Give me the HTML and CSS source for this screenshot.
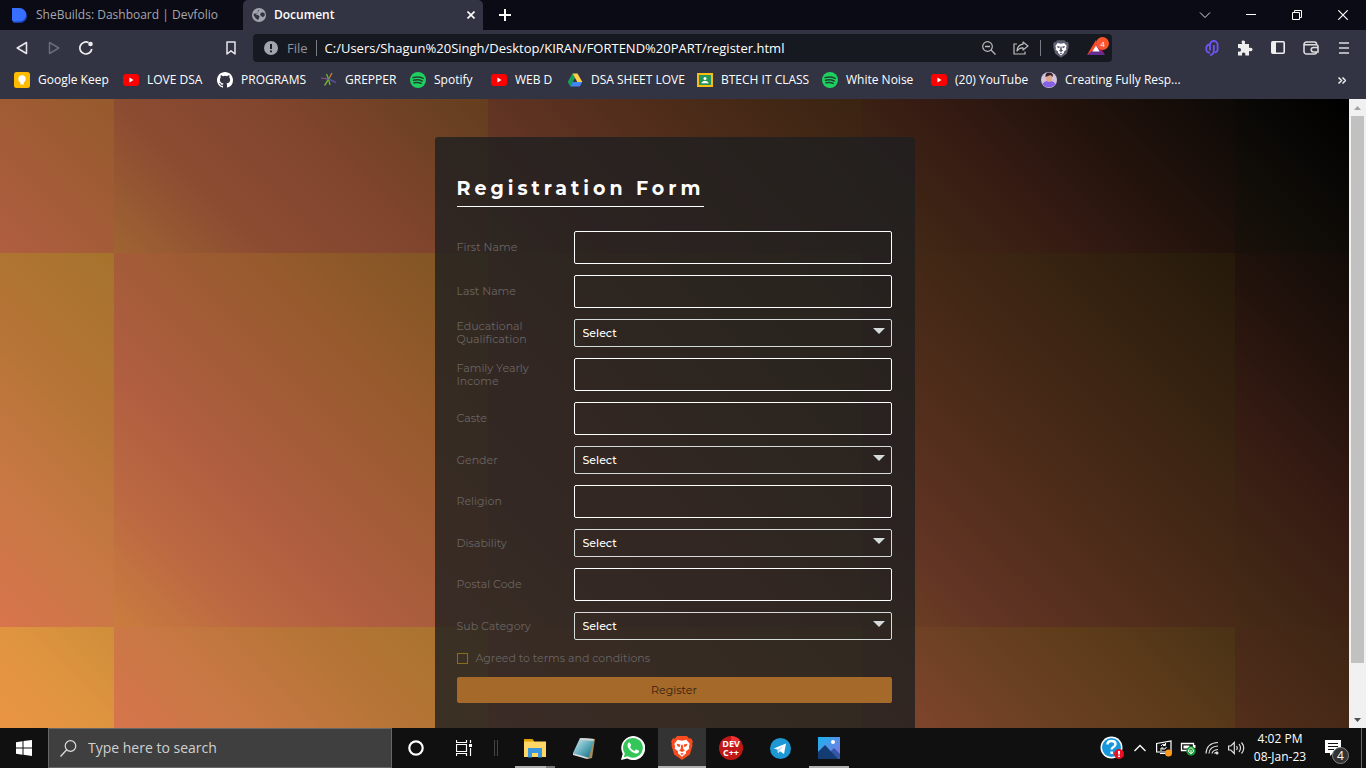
FILE: index.html
```html
<!DOCTYPE html>
<html lang="en">
<head>
<meta charset="utf-8">
<meta name="viewport" content="width=device-width, initial-scale=1">
<title>Document</title>
<link rel="stylesheet" href="styles.css">
</head>
<body>
<svg class="defs" aria-hidden="true">
  <symbol id="yt" viewBox="0 0 16 16"><rect y="2" width="16" height="12" rx="3" fill="#f00"/><path d="M6.4 5.6v4.8L10.5 8z" fill="#fff"/></symbol>
  <symbol id="spotify" viewBox="0 0 16 16"><circle cx="8" cy="8" r="8" fill="#1ed05f"/><path d="M3 5.6q5.5-1.6 10.2.7M3.5 8.3q4.700-1.300 8.700.7M4 10.800q4-1 7.200.6" fill="none" stroke="#20422f" stroke-width="1.500" stroke-linecap="round"/></symbol>
  <symbol id="lion" viewBox="0 0 20 22"><path d="M5.500 0h9l2 2.200 1.800-.2L20 5l-.7 2 .4 1.500-2.500 8.500L10 22l-7.200-5L.3 8.500.7 7 0 5l1.700-3 1.800.2z"/><path d="M6 3.500l4 .8 4-.8 3 3.500-.7 3 .5 1.500-3.300 2.800.3 1.500L10 19l-3.800-3.200.3-1.500-3.300-2.800.5-1.500L3 7z" fill="#fff"/><path d="M5 7.200l3.500.6-.6 2.200-2-.6zM15 7.200l-3.500.6.6 2.200 2-.6zM9.300 8h1.400l.5 4 1.500 1.200L10 14.700l-2.700-1.500L8.800 12zM8.300 16.200L10 15.500l1.700.7L10 17.500z"/></symbol>
</svg>

<header class="browser">
  <div class="tabs">
    <div class="tab">
      <svg width="16" height="16" viewBox="0 0 16 16"><path d="M1 2h7a7 7 0 0 1 0 14H2.500A1.500 1.500 0 0 1 1 14.500z" fill="#1d3fae"/><path d="M0 1h7.500a6.700 6.700 0 0 1 0 13.400H1.500A1.500 1.500 0 0 1 0 13z" fill="#3770ff"/></svg>
      <span>SheBuilds: Dashboard | Devfolio</span>
    </div>
    <div class="tab tab-active">
      <svg width="14" height="14" viewBox="0 0 14 14"><circle cx="7" cy="7" r="7" fill="#a2a5ad"/><path d="M7.500 1.500 5.500 3l.8 1.500-1.800.8-.5 1.500 2 .2 1.500 1.200-.3 1.800-1.200 2-2.500-1.800L1.500 7 2 5.500l3 .3M8 6l2-1.800 2.500.8.3 2.500-1.800 1.800L9 8z" fill="#323443"/></svg>
      <span>Document</span>
      <button class="tab-close" aria-label="Close tab"><svg width="8" height="8" viewBox="0 0 8 8"><path d="M.5.5l7 7M7.500.5l-7 7" stroke="#fff" stroke-width="1.600"/></svg></button>
    </div>
    <button class="new-tab" aria-label="New tab"><svg width="12" height="12" viewBox="0 0 12 12"><path d="M6 0v12M0 6h12" stroke="#fff" stroke-width="2"/></svg></button>
    <div class="window-buttons">
      <button aria-label="Search tabs"><svg width="12" height="12" viewBox="0 0 12 12"><path d="M1 3.500l5 5 5-5" fill="none" stroke="#ddd"/></svg></button>
      <button aria-label="Minimize"><svg width="10" height="12" viewBox="0 0 10 12"><path d="M0 5.500h10" stroke="#fff"/></svg></button>
      <button aria-label="Restore"><svg width="10" height="10" viewBox="0 0 10 10"><path d="M.5 2.500h7v7h-7zM2.500 2.500v-2h7v7h-2" fill="none" stroke="#fff"/></svg></button>
      <button aria-label="Close"><svg width="10" height="10" viewBox="0 0 10 10"><path d="M.3.300l9.400 9.400M9.700.3L.3 9.700" stroke="#fff" stroke-width="1.200"/></svg></button>
    </div>
  </div>

  <div class="toolbar">
    <div class="nav-buttons">
      <button aria-label="Back"><svg width="12" height="14" viewBox="0 0 12 14"><path d="M10.500 1.500v11L1.200 7z" fill="none" stroke="#e4e5ea" stroke-width="1.600" stroke-linejoin="round"/></svg></button>
      <button aria-label="Forward"><svg width="12" height="14" viewBox="0 0 12 14"><path d="M1.500 1.500v11L10.800 7z" fill="none" stroke="#696b78" stroke-width="1.500" stroke-linejoin="round"/></svg></button>
      <button aria-label="Reload"><svg width="14" height="14" viewBox="0 0 14 14"><path d="M9.500 1.600A6 6 0 1 0 12.800 8" fill="none" stroke="#eee" stroke-width="1.700"/><circle cx="11.500" cy="3" r="2.300" fill="#eee"/></svg></button>
    </div>
    <button class="save" aria-label="Bookmark this tab"><svg width="10" height="14" viewBox="0 0 10 14"><path d="M1 1h8v12L5 9.800 1 13z" fill="none" stroke="#e4e5ea" stroke-width="1.500" stroke-linejoin="round"/></svg></button>
    <div class="address">
      <svg width="14" height="14" viewBox="0 0 14 14"><circle cx="7" cy="7" r="7" fill="#a2a5ad"/><path d="M7 3v5M7 9.500v1.800" stroke="#1b1d24" stroke-width="2"/></svg>
      <span class="scheme">File</span>
      <input class="url" type="text" aria-label="Address" value="C:/Users/Shagun%20Singh/Desktop/KIRAN/FORTEND%20PART/register.html">
      <div class="address-actions">
        <button aria-label="Zoom"><svg width="14" height="14" viewBox="0 0 14 14"><circle cx="5.500" cy="5.500" r="4.800" fill="none" stroke="#bbb" stroke-width="1.200"/><path d="M3 5.500h5M9 9l4.500 4.500" stroke="#bbb" stroke-width="1.300"/></svg></button>
        <button aria-label="Share"><svg width="16" height="14" viewBox="0 0 16 14"><path d="M4 3H1v10h11v-2.500" fill="none" stroke="#bbb" stroke-width="1.200"/><path d="M10 1l5 4-5 4V6.800Q6 6.500 4 10q.3-6 6-6.800z" fill="none" stroke="#bbb" stroke-width="1.200" stroke-linejoin="round"/></svg></button>
        <button class="shields" aria-label="Shields"><svg width="16" height="18" fill="#5b5e6e"><use href="#lion"/></svg></button>
        <button class="rewards" aria-label="Rewards"><svg width="18" height="15" viewBox="0 0 18 15"><path d="M9 0L0 15l9-4.500z" fill="#ff4724"/><path d="M9 0l9 15-9-4.500z" fill="#9e1f63"/><path d="M0 15h18l-5-4H5z" fill="#662d91"/><path d="M9 5.500l3.700 6H5.300z" fill="#fff"/></svg><span>4</span></button>
      </div>
    </div>
    <div class="extensions">
      <button aria-label="Clips"><svg width="14" height="16" viewBox="0 0 14 16"><path d="M5 10.500V4.800a3.800 3.800 0 0 1 7.600 0v4.700a3 3 0 0 1-3 3M8.800 5v5.800a4 4 0 0 1-3.600 4.200M5 4.500A3.800 3.800 0 0 0 1.300 8v1.500a3 3 0 0 0 3.700 3" fill="none" stroke="#6f55f5" stroke-width="1.800"/></svg></button>
      <button aria-label="Extensions"><svg width="16" height="16" viewBox="0 0 16 16"><path d="M1 4h4.200C4 1 5 .5 6.300.5s2.400.8 1.500 3.500H12v4c3-.8 3.500.5 3.500 1.600S14.500 12 12 11v4.500H8.200c.7-2.300-.4-3-1.600-3s-2.200.7-1.400 3H1v-4c2.300.5 3-.4 3-1.600S3.300 7.500 1 8.300z" fill="#eee"/></svg></button>
      <button aria-label="Sidebar"><svg width="14" height="13" viewBox="0 0 14 13"><rect x=".8" y=".8" width="12.400" height="11.400" rx="1" fill="none" stroke="#eee" stroke-width="1.600"/><path d="M1 1h4v11H1z" fill="#eee"/></svg></button>
      <button aria-label="Wallet"><svg width="16" height="14" viewBox="0 0 16 14"><path d="M13.500 4V3a2 2 0 0 0-2-2h-8A2.500 2.500 0 0 0 1 3.500v7A2.500 2.500 0 0 0 3.500 13h8a2 2 0 0 0 2-2M1 3.800h12.500a1.500 1.500 0 0 1 1.500 1.500V11h-4.500a2 2 0 0 1 0-4.500H15" fill="none" stroke="#ddd" stroke-width="1.600"/></svg></button>
      <button aria-label="Menu"><svg width="10" height="12" viewBox="0 0 10 12"><path d="M0 1h10M0 6h10M0 11h10" stroke="#ddd" stroke-width="1.500"/></svg></button>
    </div>
  </div>

  <nav class="bookmarks" aria-label="Bookmarks">
    <a href="#"><svg width="16" height="16" viewBox="0 0 16 16"><rect width="16" height="16" rx="2.500" fill="#fb0"/><circle cx="8" cy="7" r="3.700" fill="#fff"/><path d="M6.300 9h3.400v3.500H6.300z" fill="#fff"/></svg>Google Keep</a>
    <a href="#"><svg width="16" height="16"><use href="#yt"/></svg>LOVE DSA</a>
    <a href="#"><svg width="16" height="16" viewBox="0 0 16 16"><path d="M8 0C3.580 0 0 3.580 0 8c0 3.540 2.290 6.530 5.470 7.590.4.070.55-.17.55-.38 0-.19-.01-.82-.01-1.490-2.010.37-2.530-.49-2.690-.94-.09-.23-.48-.94-.82-1.130-.28-.15-.68-.52-.01-.53.63-.01 1.080.58 1.230.82.72 1.210 1.870.87 2.330.66.070-.52.280-.87.510-1.070-1.780-.2-3.640-.89-3.640-3.950 0-.87.310-1.590.82-2.150-.08-.2-.36-1.020.080-2.120 0 0 .67-.21 2.200.82a7.600 7.600 0 0 1 4 0c1.530-1.040 2.200-.82 2.200-.82.440 1.100.160 1.920.080 2.120.51.560.82 1.270.82 2.150 0 3.070-1.870 3.750-3.650 3.950.29.250.54.730.54 1.480 0 1.070-.01 1.930-.01 2.200 0 .21.150.46.550.38A8 8 0 0 0 16 8c0-4.420-3.580-8-8-8z" fill="#fff"/></svg>PROGRAMS</a>
    <a href="#"><svg width="16" height="16" viewBox="0 0 16 16"><path d="M0 6l6.500 1" stroke="#8a5a9a" stroke-width="1.200"/><path d="M11 1L7.500 7.500 4 13" stroke="#e08035" stroke-width="1.200" fill="none"/><path d="M7.500 7L5.500 2M7.500 7l-4 6.500M7.500 7l1.500 6" stroke="#68b030" stroke-width="1.400" fill="none"/><path d="M7.500 7l7.500 3.500" stroke="#5f4d9e" stroke-width="1.400"/></svg>GREPPER</a>
    <a href="#"><svg width="16" height="16"><use href="#spotify"/></svg>Spotify</a>
    <a href="#"><svg width="16" height="16"><use href="#yt"/></svg>WEB D</a>
    <a href="#"><svg width="16" height="16" viewBox="0 0 16 16"><path d="M5.500 1.500L8 6 3.300 14.500.7 10z" fill="#17a05a"/><path d="M5.500 1.500h5L15.300 10h-5z" fill="#ffcf48"/><path d="M5.700 10h9.600l-2.600 4.500H3.300z" fill="#4285f4"/></svg>DSA SHEET LOVE</a>
    <a href="#"><svg width="16" height="16" viewBox="0 0 16 16"><path d="M0 1h16v14H0z" fill="#f6bd16"/><path d="M2 3h12v10H2z" fill="#23955b"/><circle cx="8" cy="6.500" r="1.500" fill="#fff"/><path d="M4.500 10.500q3.500-3.500 7 0v.8h-7z" fill="#fff"/></svg>BTECH IT CLASS</a>
    <a href="#"><svg width="16" height="16"><use href="#spotify"/></svg>White Noise</a>
    <a href="#"><svg width="16" height="16"><use href="#yt"/></svg>(20) YouTube</a>
    <a href="#"><svg width="16" height="16" viewBox="0 0 16 16"><circle cx="8" cy="8" r="8" fill="#d2c3d8"/><path d="M1.500 12q1-2.500 4.500-3h4q3.500.5 4.500 3A8 8 0 0 1 1.500 12" fill="#8461e6"/><ellipse cx="8" cy="6" rx="3" ry="4" fill="#e0a68c"/><path d="M4.500 5Q4 0 8.500.5T11.500 5L9.500 3z" fill="#30202a"/></svg>Creating Fully Resp...</a>
    <button aria-label="More bookmarks"><svg width="8" height="7" viewBox="0 0 8 7"><path d="M.5.5l3 3-3 3M4.500.5l3 3-3 3" fill="none" stroke="#eee" stroke-width="1.500"/></svg></button>
  </nav>
</header>

<div class="viewport">
  <main class="page">
    <form class="card">
      <h1>Registration Form</h1>
      <div class="fields">
        <label for="first">First Name</label><input id="first" type="text">
        <label for="last">Last Name</label><input id="last" type="text">
        <label for="edu">Educational Qualification</label><div class="select"><select id="edu"><option>Select</option></select></div>
        <label for="income">Family Yearly Income</label><input id="income" type="text">
        <label for="caste">Caste</label><input id="caste" type="text">
        <label for="gender">Gender</label><div class="select"><select id="gender"><option>Select</option></select></div>
        <label for="religion">Religion</label><input id="religion" type="text">
        <label for="disability">Disability</label><div class="select"><select id="disability"><option>Select</option></select></div>
        <label for="postal">Postal Code</label><input id="postal" type="text">
        <label for="sub">Sub Category</label><div class="select"><select id="sub"><option>Select</option></select></div>
      </div>
      <label class="terms"><input type="checkbox">Agreed to terms and conditions</label>
      <button class="register" type="button">Register</button>
    </form>
  </main>
  <div class="scrollbar" aria-hidden="true">
    <svg width="17" height="17" viewBox="0 0 17 17"><path d="M5 11l3.500-4L12 11z" fill="#a3a3a3"/></svg>
    <div class="thumb"></div>
    <svg class="down" width="17" height="17" viewBox="0 0 17 17"><path d="M5 7l3.500 4L12 7z" fill="#505050"/></svg>
  </div>
</div>

<footer class="taskbar">
  <button class="task" aria-label="Start"><svg width="16" height="16" viewBox="0 0 16 16"><path d="M0 2.200l6.500-.9v6.200H0zM7.500 1.100L16 0v7.500H7.500zM0 8.500h6.500v6.200L0 13.800zM7.500 8.500H16V16l-8.500-1.200z" fill="#fff"/></svg></button>
  <label class="search"><svg width="17" height="17" viewBox="0 0 17 17"><circle cx="10.500" cy="6" r="5.300" fill="none" stroke="#ddd" stroke-width="1.200"/><path d="M6.700 9.800L.5 16.500" stroke="#ddd" stroke-width="1.300"/></svg><input type="text" placeholder="Type here to search" aria-label="Search"></label>
  <button class="task" aria-label="Cortana"><svg width="16" height="16" viewBox="0 0 16 16"><circle cx="8" cy="8" r="6.700" fill="none" stroke="#fff" stroke-width="2.200"/></svg></button>
  <button class="task" aria-label="Task view"><svg width="16" height="16" viewBox="0 0 16 16"><path d="M.5 0v2.500h10V0M.5 4.500h10v7H.5zM.5 16v-2.500h10V16M14.500 0v3M14.500 8v8" fill="none" stroke="#fff" stroke-width="1.200"/><path d="M13 4h3v3h-3z" fill="#fff"/></svg></button>
  <div class="grip"></div>
  <div class="apps">
    <button class="task running grouped" aria-label="File Explorer"><svg width="22" height="20" viewBox="0 0 22 20"><path d="M0 1h8.500L10 3v3H0z" fill="#e0a100"/><path d="M0 3.500h22V19H0z" fill="#ffd766"/><path d="M4 10h14v9.500h-4V15H8v4.500H4z" fill="#3a96dd"/></svg></button>
    <button class="task" aria-label="Notepad"><svg width="22" height="22" viewBox="0 0 22 22"><defs><linearGradient id="np" x2="1" y2="1"><stop stop-color="#d8eff2"/><stop offset=".55" stop-color="#5ba9b9"/><stop offset="1" stop-color="#12647c"/></linearGradient></defs><path d="M8 1l14 1-3 19-4 1z" fill="#a38b5c"/><path d="M7 1l14 1-5 18-3 1L0 16z" fill="url(#np)"/><path d="M0 16l13 4 3 1-2 1L0 18z" fill="#d7dce0"/><path d="M8 1l13 1-.5 2L7 3z" fill="#cfd4d4"/></svg></button>
    <button class="task" aria-label="WhatsApp"><svg width="24" height="24" viewBox="0 0 24 24"><path d="M0 24l1.700-6.200A12 12 0 1 1 6.300 22.500z" fill="#fff"/><path d="M2.800 21.300l1-3.800a9.900 9.900 0 1 1 3 2.800z" fill="#35c65a"/><path d="M8.700 6.500q-.8-.3-1.300.3c-3 3.500 2.600 10 7.600 10.700 2 .2 3.500-1.300 3-2.700l-2.700-1.400q-.5-.1-.8.3l-1 1.200c-2-.7-3.600-2.200-4.400-4l.9-1.200.1-.6z" fill="#fff"/></svg></button>
    <button class="task current" aria-label="Brave"><svg width="22" height="24" fill="#fb4a1e"><use href="#lion"/></svg></button>
    <button class="task" aria-label="Dev-C++"><svg width="24" height="24" viewBox="0 0 24 24"><circle cx="12" cy="12" r="12" fill="#c01717"/><path d="M12 0a12 12 0 0 1 8.500 3.500L12 12z" fill="#e33"/><text x="12" y="11" text-anchor="middle" class="dev-mark">DEV</text><text x="12" y="20" text-anchor="middle" class="dev-mark">C++</text></svg></button>
    <button class="task" aria-label="Telegram"><svg width="21" height="21" viewBox="0 0 21 21"><circle cx="10.500" cy="10.500" r="10.500" fill="#1e98d4"/><path d="M3.800 10.500L16 5.500l-2 10.500-4-2.700-2 2-.5-3.700z" fill="#fff"/><path d="M7.500 11.600L13.500 8l-4.300 4.700L8 15.300z" fill="#b5d4e8"/></svg></button>
    <button class="task running" aria-label="Photos"><svg width="22" height="22" viewBox="0 0 22 22"><defs><linearGradient id="sky" x2="1" y2="1"><stop stop-color="#19b4ee"/><stop offset="1" stop-color="#8c6fe0"/></linearGradient></defs><path d="M0 0h22v22H0z" fill="url(#sky)"/><circle cx="15" cy="5" r="2" fill="#fff"/><path d="M11 16l5-5 6 6v5H11z" fill="#3556a8"/><path d="M0 15l7-7 13 14H0z" fill="#153b73"/></svg></button>
  </div>
  <div class="tray">
    <button aria-label="Help"><svg width="24" height="24" viewBox="0 0 24 24"><circle cx="11.500" cy="11.500" r="11" fill="#fff"/><circle cx="11.500" cy="11.500" r="9.500" fill="#1597dc"/><path d="M7.500 8.500q0-3.500 4-3.500t4 3q0 2-2 3t-1.800 2.500M11.700 15.500v2.500" stroke="#fff" stroke-width="2.500" fill="none"/><circle cx="19" cy="18" r="5" fill="#e81224"/><path d="M19 15v3.500M19 19.500v1.500" stroke="#fff" stroke-width="1.800"/></svg></button>
    <button aria-label="Hidden icons"><svg width="12" height="8" viewBox="0 0 12 8"><path d="M.5 7L6 1.500 11.500 7" fill="none" stroke="#fff" stroke-width="1.300"/></svg></button>
    <button aria-label="Updates"><svg width="16" height="18" viewBox="0 0 16 18"><path d="M.6 4.500L15 2v11H.6zM4 14.500h5" fill="none" stroke="#fff" stroke-width="1.200"/><path d="M5 7q1-2.500 4.500-1.500M9.500 4v2.500H7M10.500 8q-1 3-4.500 2M5 12V9h2.500" fill="none" stroke="#fff"/><circle cx="12.500" cy="14" r="3.500" fill="#ff9a1a"/></svg></button>
    <button aria-label="Battery"><svg width="16" height="16" viewBox="0 0 16 16"><path d="M1.500 3.500h12v7h-12z" fill="none" stroke="#fff" stroke-width="1.300"/><path d="M3.500 5.500h6v3h-6zM14 5h1.500v3H14z" fill="#fff"/><circle cx="11" cy="11" r="4.700" fill="#139a31"/><path d="M11 7.500q5 4 0 6-5-2 0-6M11 10v4" stroke="#fff" fill="none"/></svg></button>
    <button aria-label="Network"><svg width="14" height="14" viewBox="0 0 14 14"><path d="M1 12.500Q1.500 2 13 1.500M4 12.500q.5-7 9-7.500M7 12.500q.5-3.500 6-4M9.500 12.500q.5-1.500 3.500-1" fill="none" stroke="#ddd" stroke-width="1.200"/><circle cx="12" cy="12" r="1.500" fill="#ddd"/></svg></button>
    <button aria-label="Volume"><svg width="17" height="14" viewBox="0 0 17 14"><path d="M.6 5h2.200l3.500-3.500v11L2.800 9H.6zM8.500 5q1.500 2 0 4M11 3q3 4 0 8M13.500 1.500q4.500 5.500 0 11" fill="none" stroke="#ddd" stroke-width="1.200"/></svg></button>
    <div class="clock"><span>4:02 PM</span><span>08-Jan-23</span></div>
    <button class="notifications" aria-label="Notifications"><svg width="16" height="16" viewBox="0 0 16 16"><path d="M0 0h16v13H8l-3 3v-3H0z" fill="#fff"/><path d="M3 3.500h10M3 6.500h10M3 9.500h6" stroke="#111"/></svg><span>4</span></button>
  </div>
</footer>
</body>
</html>
```
FILE: styles.css
```css
* { box-sizing: border-box; }

body {
  margin: 0;
  height: 100vh;
  display: flex;
  flex-direction: column;
  overflow: hidden;
  color: #fff;
  font: 12px/16px "Segoe UI", "Open Sans", sans-serif;
}

button {
  display: grid;
  place-items: center;
  padding: 0;
  border: 0;
  background: none;
  color: inherit;
  font: inherit;
}

svg { flex: none; }
.defs { display: none; }

/* Browser chrome */
.browser { flex: none; background: #323443; }

.tabs {
  display: flex;
  height: 30px;
  background: #0b0b15;
}

.tab {
  display: flex;
  align-items: center;
  gap: 8px;
  width: 243px;
  padding: 0 8px 0 12px;
  color: #a5a6ad;
  white-space: nowrap;
}

.tab-active {
  width: 240px;
  padding-left: 9px;
  border-radius: 5px 5px 0 0;
  background: #323443;
  color: #fff;
  font-weight: 600;
}

.tab-close { margin-left: auto; }
.new-tab { width: 44px; }
.window-buttons { display: flex; margin-left: auto; }
.window-buttons button { width: 46px; }

.toolbar {
  display: flex;
  align-items: center;
  height: 35px;
}

.nav-buttons { display: flex; padding-left: 6px; }
.nav-buttons button { width: 32px; }
.save { width: 22px; margin-left: 118px; }

.address {
  flex: 1;
  display: flex;
  align-items: center;
  height: 28px;
  margin-left: 11px;
  padding: 0 0 0 11px;
  border-radius: 4px;
  background: #171921;
  font-size: 13px;
}

.scheme {
  margin: 0 8px 0 9px;
  padding-right: 8px;
  border-right: 1px solid #777983;
  color: #92949c;
}

.url {
  flex: 1;
  min-width: 0;
  padding: 0;
  border: 0;
  background: none;
  color: #fff;
  font: inherit;
}

.address-actions { display: flex; align-items: center; }
.address-actions button { width: 32px; height: 16px; }
.address-actions .shields { width: 40px; margin-left: 3px; border-left: 1px solid #777983; }

.rewards { position: relative; }
.rewards span {
  position: absolute;
  top: -3px;
  right: 3px;
  width: 13px;
  border-radius: 7px;
  background: #fb542b;
  font-size: 8px;
  line-height: 13px;
}

.extensions { display: flex; padding: 0 6px 0 83px; }
.extensions button { width: 33px; }

.bookmarks {
  display: grid;
  grid-template-columns: 109px 94px 104px 89px 81px 76px 130px 125px 109px 110px 1fr 20px;
  align-items: center;
  height: 34px;
  padding: 0 14px 4px;
}

.bookmarks a {
  display: flex;
  align-items: center;
  gap: 8px;
  color: #fff;
  text-decoration: none;
  white-space: nowrap;
}

/* Page */
.viewport {
  flex: 1;
  min-height: 0;
  display: grid;
  grid-template-columns: 1fr 17px;
}

/* Each diagonal of 374px tiles shares one gradient */
.page {
  --a: linear-gradient(45deg, #ea9444 71%, #e09440 85%, #ce8e3a);
  --b: linear-gradient(45deg, #e07a50 21%, #d8744c 35%, #c87844 55%, #b67436 75%, #a5732c);
  --c: linear-gradient(45deg, #ca7d3e, #bc6842 18%, #b05e40 35%, #a45c38 50%, #965a2c 70%, #7c5422);
  --d: linear-gradient(45deg, #a06432, #8c4c32 20%, #82452e 40%, #6a4022 63%, #5e3c1a 78%, #4a3216);
  --e: linear-gradient(45deg, #704422, #623424 18%, #4a2a18 48%, #3a2412 70%, #24190a);
  --f: linear-gradient(45deg, #462c16, #371c13 27%, #22120c 48%, #0b0906 72%, #000 88%);
  --g: linear-gradient(45deg, #1a120a, #0b0906 20%, #000 36%);
  overflow: hidden;
  padding: 38px 16px 0;
  background-color: #000;
  background-image:
    var(--c), var(--d), var(--e), var(--f), var(--g),
    var(--b), var(--c), var(--d), var(--e), var(--f),
    var(--a), var(--b), var(--c), var(--d), var(--e);
  background-size: 374px 374px;
  background-repeat: no-repeat;
  background-position:
    -260px -220px, 114px -220px, 488px -220px, 861px -220px, 1234px -220px,
    -260px 154px, 114px 154px, 488px 154px, 861px 154px, 1234px 154px,
    -260px 528px, 114px 528px, 488px 528px, 861px 528px, 1234px 528px;
}

.card {
  max-width: 480px;
  margin: 0 auto;
  padding: 40px 23px 40px 22px;
  border-radius: 3px;
  background: rgba(30, 31, 32, 0.8);
  color: #6a6562;
  font: 11px/13px Montserrat, Inter, sans-serif;
}

.card h1 {
  width: max-content;
  margin: 0 0 24px;
  padding-bottom: 5px;
  border-bottom: 1px solid #fff;
  color: #fff;
  font-size: 19px;
  font-weight: 700;
  line-height: 24px;
  letter-spacing: 4px;
}

.fields {
  display: grid;
  grid-template-columns: 88px 1fr;
  align-items: center;
  gap: 11px 29px;
}

.fields input,
.fields select {
  display: block;
  width: 100%;
  height: 33px;
  padding: 0 8px;
  border: 1px solid #fff;
  border-radius: 2px;
  background: transparent;
  color: #fff;
  font: inherit;
}

.fields select {
  height: 28px;
  border-color: #d5dbdb;
  appearance: none;
  font-weight: 500;
}

.select { position: relative; }
.select::after {
  content: "";
  position: absolute;
  top: 9px;
  right: 7px;
  border: 6px solid transparent;
  border-top-color: #d5dbdb;
  border-bottom: 0;
  pointer-events: none;
}

.terms {
  display: flex;
  align-items: center;
  gap: 8px;
  margin: 12px 0;
}

.terms input {
  width: 11px;
  height: 11px;
  margin: 0;
  border: 1px solid #8b6b1c;
  appearance: none;
}

.register {
  width: 100%;
  height: 26px;
  border-radius: 2px;
  background: #a5692a;
  color: #35200f;
}

.scrollbar {
  display: flex;
  flex-direction: column;
  background: #f1f1f1;
}

.thumb { height: 87%; margin: 0 2px; background: #c1c1c1; }
.down { margin-top: auto; }

/* Taskbar */
.taskbar {
  flex: none;
  display: flex;
  height: 40px;
  background: #101010;
}

.task { width: 48px; height: 40px; }

.search {
  display: flex;
  align-items: center;
  gap: 11px;
  width: 344px;
  padding: 0 11px;
  border: 1px solid #666;
  background: #3f3f3f;
}

.search input {
  flex: 1;
  min-width: 0;
  padding: 0;
  border: 0;
  background: none;
  color: #fff;
  font: 14px/20px "Segoe UI", "Open Sans", sans-serif;
}

.search input::placeholder { color: #d0d0d0; }

.grip {
  width: 4px;
  height: 16px;
  margin: 12px 13px 0 6px;
  border: solid #444;
  border-width: 0 1px;
}

.apps { display: flex; gap: 1px; }

.running {
  background: linear-gradient(#b0b0b0, #b0b0b0) center bottom / 40px 2px no-repeat;
}

.grouped {
  background: linear-gradient(90deg, #b0b0b0 31px, #777 31px) center bottom / 40px 2px no-repeat;
}

.current {
  background: #333 linear-gradient(#b0b0b0, #b0b0b0) center bottom / 48px 2px no-repeat;
}

.dev-mark { fill: #fff; font: bold 9px "Open Sans", sans-serif; }

.tray { display: flex; align-items: center; margin-left: auto; }
.tray button { width: 24px; }
.tray button:first-child { width: 32px; }

.clock {
  display: flex;
  flex-direction: column;
  align-items: center;
  width: 64px;
  line-height: 18px;
}

.tray .notifications {
  position: relative;
  width: 50px;
  height: 40px;
  margin-right: 4px;
  padding-right: 8px;
  border-right: 1px solid #666;
}

.notifications span {
  position: absolute;
  top: 19px;
  right: 12px;
  width: 17px;
  border: 1px solid #888;
  border-radius: 9px;
  background: #333;
  line-height: 15px;
}
```
